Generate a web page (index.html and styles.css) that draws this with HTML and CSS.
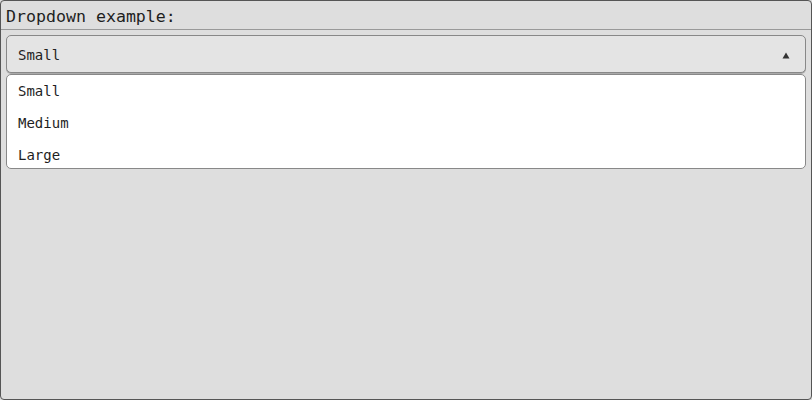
FILE: index.html
```html
<!DOCTYPE html>
<html>
<head>
<meta charset="utf-8">
<link rel="stylesheet" href="styles.css">
</head>
<body>
<div class="window">
  <div class="title">Dropdown example:</div>
  <div class="content">
    <div class="dropdown">
      <div class="select">
        <span>Small</span>
        <svg class="arrow" width="8" height="7" viewBox="0 0 8 7"><path d="M4 0.5 L7.5 6.5 L0.5 6.5 Z" fill="#333"/></svg>
      </div>
      <div class="menu">
        <div class="item">Small</div>
        <div class="item">Medium</div>
        <div class="item">Large</div>
      </div>
    </div>
  </div>
</div>
</body>
</html>
```
FILE: styles.css
```css
html, body {
  margin: 0;
  padding: 0;
  background: #dedede;
}
.window {
  box-sizing: border-box;
  width: 812px;
  height: 400px;
  border: 1px solid #555;
  border-radius: 4px;
  background: #dedede;
  font-family: "DejaVu Sans Mono", monospace;
  color: #222;
  display: flex;
  flex-direction: column;
}
.title {
  height: 29px;
  box-sizing: border-box;
  border-bottom: 1px solid #999;
  padding: 6px 0 0 5px;
  font-size: 16.6px;
  line-height: 20px;
  color: #1e1e1e;
}
.content {
  padding: 5px 5px 0 5px;
}
.dropdown {
  display: flex;
  flex-direction: column;
}
.select {
  height: 38px;
  box-sizing: border-box;
  border: 1px solid #888;
  border-radius: 5px;
  background: #e4e4e4;
  box-shadow: 0 1px 0 #aaa;
  display: flex;
  align-items: center;
  justify-content: space-between;
  padding: 2px 15px 0 11px;
  font-size: 14px;
}
.arrow {
  display: block;
}
.menu {
  margin-top: 1px;
  background: #fff;
  border: 1px solid #888;
  border-radius: 5px;
  padding: 0;
  height: 95px;
  box-sizing: border-box;
}
.item {
  height: 32px;
  line-height: 32px;
  padding-left: 11px;
  font-size: 14px;
  color: #1e1e1e;
}
```
